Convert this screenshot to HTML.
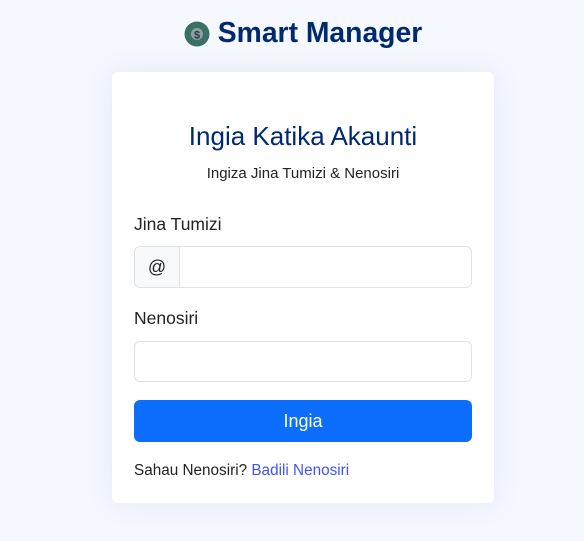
<!DOCTYPE html>
<html><head><style>
*{box-sizing:border-box;margin:0;padding:0}
body{width:584px;height:541px;background:#f5f8ff;font-family:"Liberation Sans",sans-serif;position:relative;overflow:hidden}
.logo{position:absolute;top:14px;left:11px;width:584px;text-align:center;font-size:28.3px;font-weight:bold;color:#012970;line-height:36px}
.logo svg{vertical-align:-5px;margin-right:8px}
.card{position:absolute;left:112px;top:72px;width:382px;height:431px;background:#fff;border-radius:6px;box-shadow:0 0 30px rgba(1,41,112,0.08)}
h1{position:absolute;top:49px;width:100%;text-align:center;font-size:26px;font-weight:normal;color:#012970}
.sub{position:absolute;top:93px;width:100%;text-align:center;font-size:15px;color:#222}
.lbl{position:absolute;left:22px;font-size:17.5px;color:#222}
.inp{position:absolute;left:22px;width:338px;height:42px;border:1px solid #dee2e6;border-radius:6px;background:#fff}
.addon{position:absolute;left:0;top:0;width:45px;height:40px;background:#f8f9fa;border-right:1px solid #dee2e6;border-radius:6px 0 0 6px;text-align:center;line-height:40px;font-size:18px;color:#222}
.btn{position:absolute;left:22px;top:328px;width:338px;height:42px;background:#0d6efd;border-radius:6px;color:#fff;font-size:18px;text-align:center;line-height:42px}
.ft{position:absolute;left:22px;top:390px;font-size:15.3px;color:#222}
.ft span{color:#4154f1}
</style></head><body>
<div class="logo"><svg width="26" height="26" viewBox="0 0 26 26"><circle cx="13" cy="13" r="12.5" fill="#3a6f68"/><circle cx="13" cy="13" r="6" fill="#8fa0a4"/><text x="13" y="17.5" font-size="11" font-weight="bold" text-anchor="middle" fill="#2a3a40" font-family="Liberation Sans">$</text></svg>Smart Manager</div>
<div class="card">
<h1>Ingia Katika Akaunti</h1>
<div class="sub">Ingiza Jina Tumizi &amp; Nenosiri</div>
<div class="lbl" style="top:142px">Jina Tumizi</div>
<div class="inp" style="top:174px"><div class="addon">@</div></div>
<div class="lbl" style="top:236px">Nenosiri</div>
<div class="inp" style="top:269px;height:41px"></div>
<div class="btn">Ingia</div>
<div class="ft">Sahau Nenosiri? <span>Badili Nenosiri</span></div>
</div>
</body></html>
